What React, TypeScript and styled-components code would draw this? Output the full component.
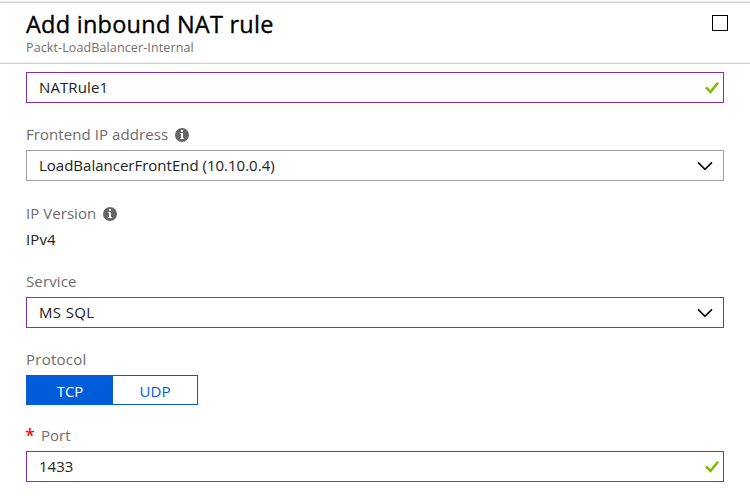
import React from "react";
import styled, { createGlobalStyle } from "styled-components";

const GlobalStyle = createGlobalStyle`
  * { box-sizing: border-box; }
  body {
    margin: 0;
    background: #fff;
    font-family: "Open Sans", "Noto Sans", sans-serif;
    font-size: 15px;
    font-weight: 400;
    line-height: 20px;
    color: #222;
  }
`;

const Blade = styled.main`
  width: 750px;
  height: 496px;
  overflow: hidden;
  background: #fff;
  padding-top: 1px;
`;

const Header = styled.header`
  display: flex;
  justify-content: space-between;
  align-items: flex-start;
  height: 63px;
  padding: 7px 22px 0 26px;
  border-top: 1px solid #f0f0f0;
  border-bottom: 1px solid #d2d2d2;
  box-shadow: inset 0 1px #d2d2d2, inset 0 -1px #f0f0f0;
`;

const Title = styled.h1`
  margin: 0;
  font-size: 23.5px;
  line-height: 30px;
  font-weight: 500;
  -webkit-text-stroke: 0.35px #000;
  color: #000;
  white-space: nowrap;
`;

const Subtitle = styled.div`
  font-size: 12.5px;
  line-height: 16px;
  margin-top: 1px;
  color: #707070;
`;

const MaximizeButton = styled.button`
  width: 16px;
  height: 16px;
  margin-top: 6px;
  padding: 0;
  border: 1px solid #000;
  background: #fff;
`;

const Form = styled.div`
  display: flex;
  flex-direction: column;
  padding: 8px 26px 0;
`;

const Group = styled.section<{ $gap: number }>`
  display: flex;
  flex-direction: column;
  gap: 6px;
  margin-top: ${(p) => p.$gap}px;
`;

const Label = styled.label`
  display: flex;
  align-items: center;
  height: 20px;
  color: #6c6c6c;
  white-space: nowrap;
`;

const Text = styled.span<{ $track?: number }>`
  display: block;
  letter-spacing: ${(p) => p.$track ?? 0}px;
  white-space: nowrap;
`;

const Field = styled.div<{ $edited?: boolean; $pad?: number }>`
  display: flex;
  align-items: center;
  justify-content: space-between;
  height: 31px;
  padding: 0 ${(p) => p.$pad ?? 4}px 0 12px;
  border: 1px solid ${(p) => (p.$edited ? "#8a2da5" : "#a0a0a0")};

  > span {
    margin-bottom: 1px;
  }
`;

const Value = styled.div`
  height: 20px;
`;

const Toggle = styled.div`
  display: flex;
  width: 172px;
  height: 30px;
  border: 1px solid #015cda;
`;

const Option = styled.button<{ $active?: boolean }>`
  flex: 0 0 ${(p) => (p.$active ? 86 : 84)}px;
  padding: 2px 0 0;
  border: 0;
  font: inherit;
  color: ${(p) => (p.$active ? "#fff" : "#015cda")};
  background: ${(p) => (p.$active ? "#015cda" : "#fff")};
`;

const Required = styled.span`
  width: 15px;
  margin-left: -1px;
  margin-right: 1px;
  font-size: 18px;
  font-weight: 600;
  color: #e81123;
`;

const InfoSvg = styled.svg`
  margin: 2px 0 0 7px;
`;

const Info = () => (
  <InfoSvg width="14" height="14" viewBox="0 0 14 14">
    <circle cx="7" cy="7" r="7" fill="#666" />
    <path d="M6 2h2v2H6zM5 5h3v5h1v1H5v-1h1V6H5z" fill="#fff" />
  </InfoSvg>
);

const Check = () => (
  <svg width="14" height="13" viewBox="0 0 14 13">
    <path d="M0.9 6.4 5.5 10.9 13 1.7" fill="none" stroke="#7fba00" strokeWidth="2.5" />
  </svg>
);

const Chevron = () => (
  <svg width="16" height="10" viewBox="0 0 16 10">
    <path d="M1 1.4 8 8.3 15 1.4" fill="none" stroke="#111" strokeWidth="1.7" />
  </svg>
);

export default function App() {
  return (
    <>
      <GlobalStyle />
      <Blade>
        <Header>
          <div>
            <Title><Text $track={0.25}>Add inbound NAT rule</Text></Title>
            <Subtitle><Text $track={0.12}>Packt-LoadBalancer-Internal</Text></Subtitle>
          </div>
          <MaximizeButton aria-label="Maximize" />
        </Header>
        <Form>
          <Field $edited>
            <Text $track={0.1}>NATRule1</Text>
            <Check />
          </Field>
          <Group $gap={21}>
            <Label><Text $track={0.07}>Frontend IP address</Text><Info /></Label>
            <Field $pad={10}>
              <Text>LoadBalancerFrontEnd (10.10.0.4)</Text>
              <Chevron />
            </Field>
          </Group>
          <Group $gap={22}>
            <Label><Text $track={0.05}>IP Version</Text><Info /></Label>
            <Value><Text $track={0.1}>IPv4</Text></Value>
          </Group>
          <Group $gap={22}>
            <Label><Text $track={0.12}>Service</Text></Label>
            <Field $edited $pad={10}>
              <Text $track={0.35}>MS SQL</Text>
              <Chevron />
            </Field>
          </Group>
          <Group $gap={21}>
            <Label><Text $track={0.25}>Protocol</Text></Label>
            <Toggle>
              <Option $active><Text>TCP</Text></Option>
              <Option><Text>UDP</Text></Option>
            </Toggle>
          </Group>
          <Group $gap={20}>
            <Label><Required>*</Required><Text>Port</Text></Label>
            <Field $edited>
              <Text>1433</Text>
              <Check />
            </Field>
          </Group>
        </Form>
      </Blade>
    </>
  );
}
